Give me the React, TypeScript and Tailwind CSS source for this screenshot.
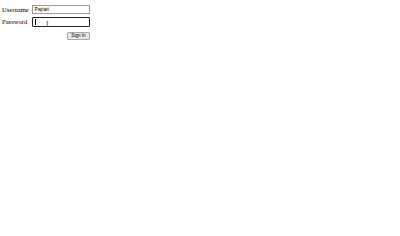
export default function App() {
  return (
    <div className="w-[400px] h-[236px] bg-white pl-[2px] pt-[5px] text-black" style={{ fontFamily: '"Liberation Serif", serif' }}>
      <div className="flex flex-col w-[88px]">
        <div className="flex items-center justify-between h-[9px]">
          <span className="text-[6.6px] leading-none mt-[1px]">Username</span>
          <div className="w-[58px] h-[9px] border border-[#9a9a9a] bg-white flex items-center pl-[1.5px]">
            <span className="text-[5.2px] leading-none" style={{ fontFamily: '"Liberation Sans", sans-serif' }}>Pajtati</span>
          </div>
        </div>
        <div className="flex items-center justify-between h-[10px] mt-[3px]">
          <span className="text-[6.6px] leading-none mt-[1px]">Password</span>
          <div className="relative w-[58px] h-[10px] border border-[#222] rounded-[1px] bg-white flex items-center pl-[2px]">
            <span className="w-px h-[6px] bg-black" />
            <span className="absolute left-[13px] top-[3px] text-[8px] leading-none text-[#555]">I</span>
          </div>
        </div>
        <div className="flex justify-end mt-[5px]">
          <button className="w-[23px] h-[8px] bg-[#e6e6e6] border border-[#a8a8a8] rounded-[1px] flex items-center justify-center">
            <span className="text-[4.6px] leading-none" style={{ fontFamily: '"Liberation Sans", sans-serif' }}>Sign In</span>
          </button>
        </div>
      </div>
    </div>
  );
}
